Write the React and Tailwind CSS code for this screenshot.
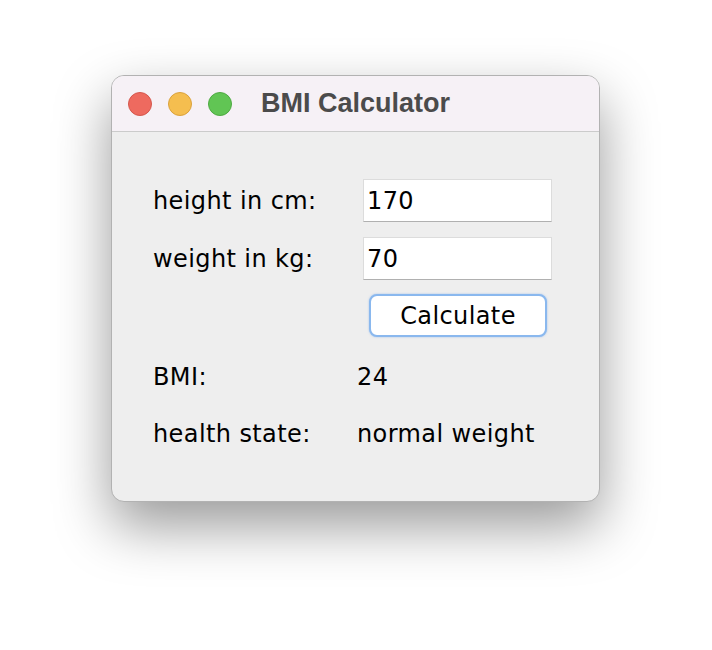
import React from "react";

const ui = { fontFamily: '"DejaVu Sans", "Liberation Sans", sans-serif' };

function Light({ color, border }) {
  return (
    <span
      className={`block w-[24px] h-[24px] rounded-full border ${color} ${border}`}
    />
  );
}

function Field({ value }) {
  return (
    <div className="w-[189px] h-[43px] bg-white border border-[#dcdcdc] border-b-[#b0b0b0] flex items-center pl-[3px] text-[24px] tracking-[0.4px] text-black">
      {value}
    </div>
  );
}

export default function App() {
  return (
    <div className="w-[712px] h-[650px] bg-white pl-[111px] pt-[75px]" style={ui}>
      <div className="w-[489px] h-[427px] rounded-[13px] border border-[#b2b2b2] bg-[#eeeeee] overflow-hidden shadow-[0_24px_55px_rgba(0,0,0,0.4)] flex flex-col">
        {/* title bar */}
        <div className="h-[56px] bg-[#f6f1f6] border-b border-[#cbcbcb] flex items-center pl-[16px]">
          <div className="flex gap-[16px]">
            <Light color="bg-[#ee6a5f]" border="border-[#d5574d]" />
            <Light color="bg-[#f5be4f]" border="border-[#dba23c]" />
            <Light color="bg-[#61c554]" border="border-[#4eaa42]" />
          </div>
          <span
            className="ml-[29px] text-[27px] font-bold text-[#4b4b4b]"
            style={{ fontFamily: '"Liberation Sans", Arial, sans-serif' }}
          >
            BMI Calculator
          </span>
        </div>

        {/* form */}
        <div className="pl-[41px] pt-[47px] text-[24px] tracking-[0.4px] text-black">
          <div className="flex items-center h-[43px]">
            <span className="w-[210px]">height in cm:</span>
            <Field value="170" />
          </div>
          <div className="flex items-center h-[43px] mt-[15px]">
            <span className="w-[210px]">weight in kg:</span>
            <Field value="70" />
          </div>
          <div className="flex mt-[14px] pl-[216px]">
            <button
              className="w-[178px] h-[43px] rounded-[8px] bg-white border-2 border-[#8ab8ee] shadow-[0_0_2px_rgba(120,170,235,0.7)] text-[24px] tracking-[0.4px] text-black"
              style={ui}
            >
              Calculate
            </button>
          </div>
          <div className="flex items-center h-[40px] mt-[20px]">
            <span className="w-[204px]">BMI:</span>
            <span>24</span>
          </div>
          <div className="flex items-center h-[40px] mt-[17px]">
            <span className="w-[204px]">health state:</span>
            <span>normal weight</span>
          </div>
        </div>
      </div>
    </div>
  );
}
